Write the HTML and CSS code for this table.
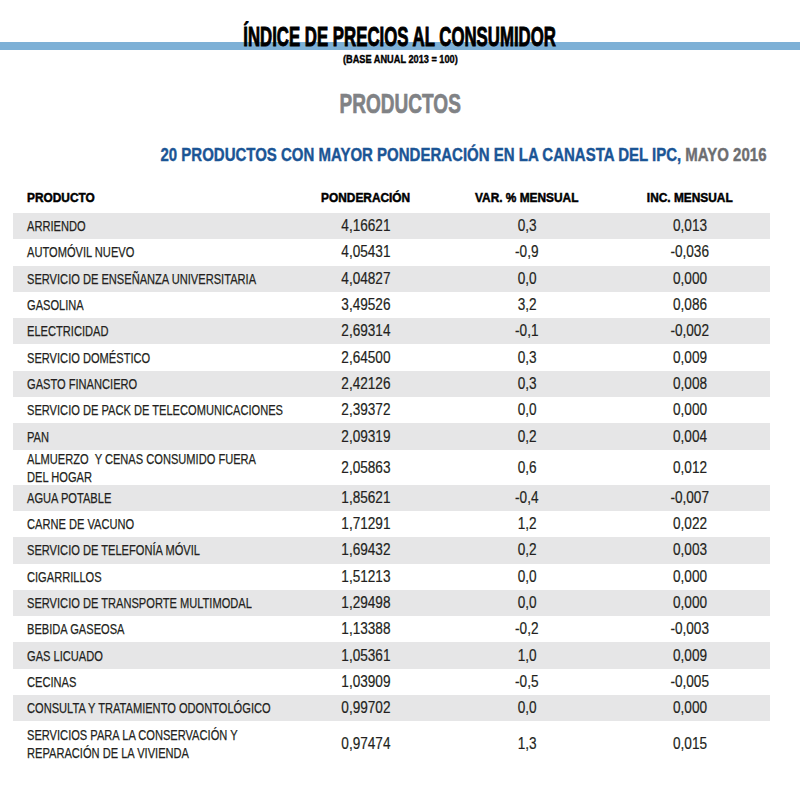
FILE: index.html
```html
<!DOCTYPE html>
<html lang="es">
<head>
<meta charset="utf-8">
<title>Índice de Precios al Consumidor</title>
<link rel="stylesheet" href="styles.css">
</head>
<body>
<header class="top">
  <div class="title-band"><h1 class="title"><span class="sq sq-title">ÍNDICE DE PRECIOS AL CONSUMIDOR</span></h1></div>
  <p class="base"><span class="sq sq-base">(BASE ANUAL 2013 = 100)</span></p>
  <h2 class="section"><span class="sq sq-section">PRODUCTOS</span></h2>
  <div class="subtitle"><span class="sq sq-sub">20 PRODUCTOS CON MAYOR PONDERACIÓN EN LA CANASTA DEL IPC, <span class="month">MAYO 2016</span></span></div>
</header>
<main class="table">
  <div class="row head">
    <div class="cell left"><span class="sq sq-head">PRODUCTO</span></div>
    <div class="cell"><span class="sq sq-head c">PONDERACIÓN</span></div>
    <div class="cell"><span class="sq sq-head c">VAR. % MENSUAL</span></div>
    <div class="cell"><span class="sq sq-head c">INC. MENSUAL</span></div>
  </div>
  <div class="row odd"><div class="cell left"><span class="sq sq-name">ARRIENDO</span></div><div class="cell"><span class="sq sq-num">4,16621</span></div><div class="cell"><span class="sq sq-num">0,3</span></div><div class="cell"><span class="sq sq-num">0,013</span></div></div>
  <div class="row"><div class="cell left"><span class="sq sq-name">AUTOMÓVIL NUEVO</span></div><div class="cell"><span class="sq sq-num">4,05431</span></div><div class="cell"><span class="sq sq-num">-0,9</span></div><div class="cell"><span class="sq sq-num">-0,036</span></div></div>
  <div class="row odd"><div class="cell left"><span class="sq sq-name">SERVICIO DE ENSEÑANZA UNIVERSITARIA</span></div><div class="cell"><span class="sq sq-num">4,04827</span></div><div class="cell"><span class="sq sq-num">0,0</span></div><div class="cell"><span class="sq sq-num">0,000</span></div></div>
  <div class="row"><div class="cell left"><span class="sq sq-name">GASOLINA</span></div><div class="cell"><span class="sq sq-num">3,49526</span></div><div class="cell"><span class="sq sq-num">3,2</span></div><div class="cell"><span class="sq sq-num">0,086</span></div></div>
  <div class="row odd"><div class="cell left"><span class="sq sq-name">ELECTRICIDAD</span></div><div class="cell"><span class="sq sq-num">2,69314</span></div><div class="cell"><span class="sq sq-num">-0,1</span></div><div class="cell"><span class="sq sq-num">-0,002</span></div></div>
  <div class="row"><div class="cell left"><span class="sq sq-name">SERVICIO DOMÉSTICO</span></div><div class="cell"><span class="sq sq-num">2,64500</span></div><div class="cell"><span class="sq sq-num">0,3</span></div><div class="cell"><span class="sq sq-num">0,009</span></div></div>
  <div class="row odd"><div class="cell left"><span class="sq sq-name">GASTO FINANCIERO</span></div><div class="cell"><span class="sq sq-num">2,42126</span></div><div class="cell"><span class="sq sq-num">0,3</span></div><div class="cell"><span class="sq sq-num">0,008</span></div></div>
  <div class="row"><div class="cell left"><span class="sq sq-name">SERVICIO DE PACK DE TELECOMUNICACIONES</span></div><div class="cell"><span class="sq sq-num">2,39372</span></div><div class="cell"><span class="sq sq-num">0,0</span></div><div class="cell"><span class="sq sq-num">0,000</span></div></div>
  <div class="row odd"><div class="cell left"><span class="sq sq-name">PAN</span></div><div class="cell"><span class="sq sq-num">2,09319</span></div><div class="cell"><span class="sq sq-num">0,2</span></div><div class="cell"><span class="sq sq-num">0,004</span></div></div>
  <div class="row tall"><div class="cell left"><span class="sq sq-name two">ALMUERZO&nbsp; Y CENAS CONSUMIDO FUERA<br>DEL HOGAR</span></div><div class="cell"><span class="sq sq-num">2,05863</span></div><div class="cell"><span class="sq sq-num">0,6</span></div><div class="cell"><span class="sq sq-num">0,012</span></div></div>
  <div class="row odd"><div class="cell left"><span class="sq sq-name">AGUA POTABLE</span></div><div class="cell"><span class="sq sq-num">1,85621</span></div><div class="cell"><span class="sq sq-num">-0,4</span></div><div class="cell"><span class="sq sq-num">-0,007</span></div></div>
  <div class="row"><div class="cell left"><span class="sq sq-name">CARNE DE VACUNO</span></div><div class="cell"><span class="sq sq-num">1,71291</span></div><div class="cell"><span class="sq sq-num">1,2</span></div><div class="cell"><span class="sq sq-num">0,022</span></div></div>
  <div class="row odd"><div class="cell left"><span class="sq sq-name">SERVICIO DE TELEFONÍA MÓVIL</span></div><div class="cell"><span class="sq sq-num">1,69432</span></div><div class="cell"><span class="sq sq-num">0,2</span></div><div class="cell"><span class="sq sq-num">0,003</span></div></div>
  <div class="row"><div class="cell left"><span class="sq sq-name">CIGARRILLOS</span></div><div class="cell"><span class="sq sq-num">1,51213</span></div><div class="cell"><span class="sq sq-num">0,0</span></div><div class="cell"><span class="sq sq-num">0,000</span></div></div>
  <div class="row odd"><div class="cell left"><span class="sq sq-name">SERVICIO DE TRANSPORTE MULTIMODAL</span></div><div class="cell"><span class="sq sq-num">1,29498</span></div><div class="cell"><span class="sq sq-num">0,0</span></div><div class="cell"><span class="sq sq-num">0,000</span></div></div>
  <div class="row"><div class="cell left"><span class="sq sq-name">BEBIDA GASEOSA</span></div><div class="cell"><span class="sq sq-num">1,13388</span></div><div class="cell"><span class="sq sq-num">-0,2</span></div><div class="cell"><span class="sq sq-num">-0,003</span></div></div>
  <div class="row odd"><div class="cell left"><span class="sq sq-name">GAS LICUADO</span></div><div class="cell"><span class="sq sq-num">1,05361</span></div><div class="cell"><span class="sq sq-num">1,0</span></div><div class="cell"><span class="sq sq-num">0,009</span></div></div>
  <div class="row"><div class="cell left"><span class="sq sq-name">CECINAS</span></div><div class="cell"><span class="sq sq-num">1,03909</span></div><div class="cell"><span class="sq sq-num">-0,5</span></div><div class="cell"><span class="sq sq-num">-0,005</span></div></div>
  <div class="row odd"><div class="cell left"><span class="sq sq-name">CONSULTA Y TRATAMIENTO ODONTOLÓGICO</span></div><div class="cell"><span class="sq sq-num">0,99702</span></div><div class="cell"><span class="sq sq-num">0,0</span></div><div class="cell"><span class="sq sq-num">0,000</span></div></div>
  <div class="row last"><div class="cell left"><span class="sq sq-name two">SERVICIOS PARA LA CONSERVACIÓN Y<br>REPARACIÓN DE LA VIVIENDA</span></div><div class="cell"><span class="sq sq-num">0,97474</span></div><div class="cell"><span class="sq sq-num">1,3</span></div><div class="cell"><span class="sq sq-num">0,015</span></div></div>
</main>
</body>
</html>
```
FILE: styles.css
```css
html, body {
  margin: 0;
  padding: 0;
  background: #ffffff;
}
body {
  font-family: "Liberation Sans", Arial, sans-serif;
  color: #231f20;
  width: 800px;
  height: 800px;
  overflow: hidden;
}
.sq {
  display: inline-block;
  white-space: nowrap;
  transform-origin: center center;
}
.top {
  display: flex;
  flex-direction: column;
}
.title-band {
  padding-top: 23px;
  height: 29px;
  background: linear-gradient(to bottom, transparent 0, transparent 42px, #7db0d6 42px, #7db0d6 50px, transparent 50px);
  text-align: center;
}
.title {
  margin: 0;
  font-size: 28px;
  line-height: 28px;
  font-weight: 700;
  color: #000;
}
.sq-title {
  transform: scaleX(0.6);
  -webkit-text-stroke: 1px #000;
}
.base {
  margin: 2.5px 0 0;
  font-size: 10px;
  line-height: 10px;
  font-weight: 700;
  text-align: center;
  color: #000;
}
.sq-base {
  transform: scaleX(0.92);
  -webkit-text-stroke: 0.35px #000;
}
.section {
  margin: 25px 0 0;
  font-size: 28px;
  line-height: 28px;
  font-weight: 700;
  text-align: center;
  color: #808285;
}
.sq-section {
  transform: scaleX(0.68);
  -webkit-text-stroke: 0.7px #808285;
}
.subtitle {
  margin-top: 28px;
  display: flex;
  justify-content: flex-end;
  padding-right: 34px;
  font-size: 18px;
  line-height: 18px;
  font-weight: 700;
  color: #1b5595;
}
.sq-sub {
  transform: scaleX(0.833);
  transform-origin: right center;
  -webkit-text-stroke: 0.4px #1b5595;
}
.month {
  color: #6d6e71;
  -webkit-text-stroke: 0.4px #6d6e71;
}
.table {
  margin: 24px 0 0 13px;
  width: 757px;
  display: flex;
  flex-direction: column;
}
.row {
  box-sizing: border-box;
  width: 757px;
  padding-right: 17px;
  display: grid;
  grid-template-columns: 292px 122px 200px 126px;
  align-items: center;
  height: 26.3px;
}
.row.odd {
  background: #e6e6e7;
}
.row.head {
  height: auto;
  padding-bottom: 7.5px;
  align-items: start;
}
.row.tall {
  height: 35px;
}
.row.last {
  height: 46px;
}
.cell {
  text-align: center;
  min-width: 0;
}
.cell.left {
  text-align: left;
  padding-left: 14px;
}
.sq-head {
  font-size: 13.5px;
  line-height: 13.5px;
  font-weight: 700;
  color: #000;
  transform: scaleX(0.88);
  transform-origin: left center;
  -webkit-text-stroke: 0.5px #000;
}
.sq-head.c {
  transform-origin: center center;
}
.sq-name {
  font-size: 15px;
  line-height: 15px;
  transform: scaleX(0.74);
  transform-origin: left center;
  -webkit-text-stroke: 0.25px #231f20;
}
.sq-name.two {
  line-height: 18px;
}
.sq-num {
  font-size: 16px;
  line-height: 16px;
  transform: scaleX(0.85);
  -webkit-text-stroke: 0.2px #231f20;
}
```
